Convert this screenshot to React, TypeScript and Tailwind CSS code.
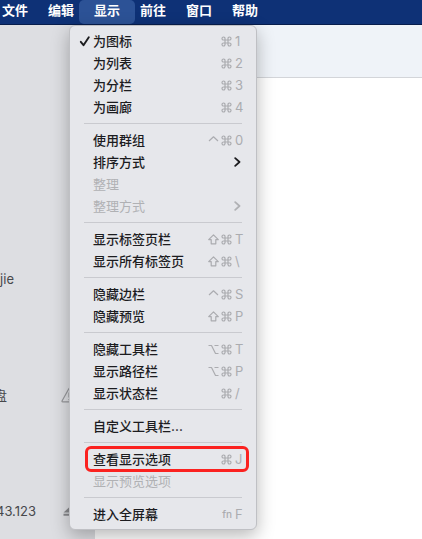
import React from 'react';

type Modifier = 'command' | 'shift' | 'option' | 'control' | 'fn';

type Item = {
  label: string;
  modifiers?: Modifier[];
  shortcut?: string;
  checked?: boolean;
  disabled?: boolean;
  submenu?: boolean;
  highlighted?: boolean;
};

const menuBar = ['文件', '编辑', '显示', '前往', '窗口', '帮助'];

const groups: Item[][] = [
  [
    { label: '为图标', modifiers: ['command'], shortcut: '1', checked: true },
    { label: '为列表', modifiers: ['command'], shortcut: '2' },
    { label: '为分栏', modifiers: ['command'], shortcut: '3' },
    { label: '为画廊', modifiers: ['command'], shortcut: '4' },
  ],
  [
    { label: '使用群组', modifiers: ['control', 'command'], shortcut: '0' },
    { label: '排序方式', submenu: true },
    { label: '整理', disabled: true },
    { label: '整理方式', submenu: true, disabled: true },
  ],
  [
    { label: '显示标签页栏', modifiers: ['shift', 'command'], shortcut: 'T' },
    { label: '显示所有标签页', modifiers: ['shift', 'command'], shortcut: '\\' },
  ],
  [
    { label: '隐藏边栏', modifiers: ['control', 'command'], shortcut: 'S' },
    { label: '隐藏预览', modifiers: ['shift', 'command'], shortcut: 'P' },
  ],
  [
    { label: '隐藏工具栏', modifiers: ['option', 'command'], shortcut: 'T' },
    { label: '显示路径栏', modifiers: ['option', 'command'], shortcut: 'P' },
    { label: '显示状态栏', modifiers: ['command'], shortcut: '/' },
  ],
  [{ label: '自定义工具栏...' }],
  [
    { label: '查看显示选项', modifiers: ['command'], shortcut: 'J', highlighted: true },
    { label: '显示预览选项', disabled: true },
  ],
  [{ label: '进入全屏幕', modifiers: ['fn'], shortcut: 'F' }],
];

const modifierPaths: Record<string, string> = {
  command:
    'M4 4V2.6A1.5 1.5 0 1 0 2.5 4H8.5A1.5 1.5 0 1 0 7 2.6V8.4A1.5 1.5 0 1 0 8.5 7H2.5A1.5 1.5 0 1 0 4 8.4Z',
  shift: 'M5.5 0.8L10.3 5.6H7.8V9.8H3.2V5.6H0.7Z',
  option: 'M0.5 1.5H3.5L7.5 9.5H10.5M6.5 1.5H10.5',
  control: 'M1 6L5.5 1.8L10 6',
};

const ModifierIcon = ({ name }: { name: Modifier }) => {
  if (name === 'fn') {
    return <span className="text-[10px] font-medium">fn</span>;
  }
  return (
    <svg
      className="h-[11px] w-[11px] shrink-0"
      viewBox="0 0 11 11"
      fill="none"
      stroke="currentColor"
      strokeWidth="1.2"
      strokeLinejoin="round"
    >
      <path d={modifierPaths[name]} />
    </svg>
  );
};

const MenuRow = ({ item }: { item: Item }) => (
  <li role="none" className="relative">
    <button
      type="button"
      role="menuitem"
      disabled={item.disabled}
      className={`flex h-[22px] w-full items-center pr-3 pl-2 text-left text-[13px] leading-[22px] ${
        item.disabled ? 'text-[#b0b1b4]' : 'font-medium text-[#1c1c1f]'
      }`}
    >
      <span className="flex w-[14px] shrink-0">
        {item.checked && (
          <svg className="h-3 w-3" viewBox="0 0 12 12" fill="none" stroke="currentColor" strokeWidth="1.9" strokeLinecap="round" strokeLinejoin="round">
            <path d="M1.8 6.8L4.5 10.2L9.8 2.2" />
          </svg>
        )}
      </span>
      <span className="grow whitespace-nowrap">{item.label}</span>
      {item.shortcut && (
        <span className="flex items-center gap-[2px] font-normal text-[#abacb0]">
          {item.modifiers?.map((name) => (
            <ModifierIcon key={name} name={name} />
          ))}
          <span className="ml-px w-2">{item.shortcut}</span>
        </span>
      )}
      {item.submenu && (
        <svg className="mr-[2px] h-[10px] w-[7px]" viewBox="0 0 7 10" fill="none" stroke="currentColor" strokeWidth="1.8" strokeLinecap="round" strokeLinejoin="round">
          <path d="M1.2 1.2L5.5 5L1.2 8.8" />
        </svg>
      )}
    </button>
    {item.highlighted && (
      <span className="pointer-events-none absolute -top-[2px] right-[6px] -bottom-[2px] left-[14px] rounded-[6px] border-[3px] border-[#fb2220]" />
    )}
  </li>
);

const ViewMenu = () => (
  <div
    role="menu"
    className="absolute top-[25px] -left-[10px] z-10 w-[188px] rounded-[6px] border border-[#bfc0c4] bg-[#e6e7eb] pt-[4px] pr-px pb-[4px] pl-px shadow-[0_6px_18px_rgba(0,0,0,0.28)]"
  >
    {groups.map((group, index) => (
      <React.Fragment key={index}>
        {index > 0 && <hr className="mx-[13px] my-[5px] border-t border-[#c9cacf]" />}
        <ul role="none">
          {group.map((item) => (
            <MenuRow key={item.label} item={item} />
          ))}
        </ul>
      </React.Fragment>
    ))}
  </div>
);

const App = () => {
  return (
    <div className="flex min-h-screen flex-col overflow-hidden bg-white font-[Inter,'Noto_Sans_CJK_SC',sans-serif]">
      <header className="h-[25px] border-b border-[#071d4c] bg-[#0e3176]">
        <nav className="-ml-[3px] flex">
          {menuBar.map((title) => (
            <div key={title} className="relative -ml-[10px] w-14 shrink-0">
              <button
                type="button"
                className={`block h-6 w-full rounded-[5px] pb-1 text-center text-[13px] leading-5 font-bold text-white ${
                  title === '显示' ? 'bg-[#2c5296]' : ''
                }`}
              >
                {title}
              </button>
              {title === '显示' && <ViewMenu />}
            </div>
          ))}
        </nav>
      </header>

      <div className="flex grow">
        <aside className="w-[95px] shrink-0 overflow-hidden bg-[#dddee2] pt-[244px] text-[13px] leading-5 text-[#47484c]">
          <ul className="flex flex-col gap-24">
            <li className="flex">
              <span className="flex w-[14px] justify-end">ujie</span>
            </li>
            <li className="flex items-center justify-between pr-[18px]">
              <span className="flex w-[7px] justify-end">盘</span>
              <svg className="h-4 w-4" viewBox="0 0 16 16" fill="none" stroke="#96979b" strokeWidth="1.2" strokeLinejoin="round">
                <path d="M8 1.5L15 14Q15.2 14.8 14.4 14.8H1.6Q0.8 14.8 1 14Z" />
                <path d="M8 5.5V10.5M8 12V13.2" />
              </svg>
            </li>
            <li className="flex items-center justify-between pr-[18px]">
              <span className="flex w-9 justify-end">43.123</span>
              <svg className="h-[11px] w-[14px]" viewBox="0 0 14 11" fill="#88898d">
                <path d="M7 0.5L13.5 6.5H0.5ZM0.5 7.8H13.5V9.8H0.5Z" />
              </svg>
            </li>
          </ul>
        </aside>
        <main className="grow bg-white">
          <div className="h-[53px] border-b border-[#d3d5d9] bg-[#eff3f8]" />
        </main>
      </div>
    </div>
  );
};

export default App;
